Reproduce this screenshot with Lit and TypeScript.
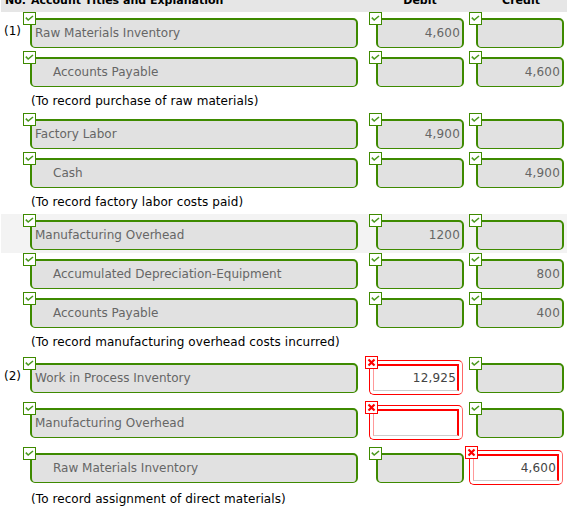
import { LitElement, html, css, svg } from "lit";
import { customElement } from "lit/decorators.js";

type Cell = { v?: string; bad?: boolean };
type Row =
  | { kind: "entry"; no?: string; acct: string; indent?: boolean; d: Cell; c: Cell; hi?: boolean; cls?: string }
  | { kind: "note"; text: string; cls?: string };

const rows: Row[] = [
  { kind: "entry", no: "(1)", acct: "Raw Materials Inventory", d: { v: "4,600" }, c: {} },
  { kind: "entry", acct: "Accounts Payable", indent: true, d: {}, c: { v: "4,600" } },
  { kind: "note", text: "(To record purchase of raw materials)" },
  { kind: "entry", acct: "Factory Labor", d: { v: "4,900" }, c: {} },
  { kind: "entry", acct: "Cash", indent: true, d: {}, c: { v: "4,900" } },
  { kind: "note", text: "(To record factory labor costs paid)" },
  { kind: "entry", acct: "Manufacturing Overhead", d: { v: "1200" }, c: {}, hi: true },
  { kind: "entry", acct: "Accumulated Depreciation-Equipment", indent: true, d: {}, c: { v: "800" } },
  { kind: "entry", acct: "Accounts Payable", indent: true, d: {}, c: { v: "400" } },
  { kind: "note", text: "(To record manufacturing overhead costs incurred)", cls: "tight" },
  { kind: "entry", no: "(2)", acct: "Work in Process Inventory", d: { v: "12,925", bad: true }, c: {}, cls: "wide" },
  { kind: "entry", acct: "Manufacturing Overhead", d: { bad: true }, c: {}, cls: "wide" },
  { kind: "entry", acct: "Raw Materials Inventory", indent: true, d: {}, c: { v: "4,600", bad: true }, cls: "wide" },
  { kind: "note", text: "(To record assignment of direct materials)", cls: "last" },
];

const badge = (bad: boolean) => html`<span class="badge ${bad ? "x" : "ok"}">
  <svg viewBox="0 0 11 11" width="11" height="11">
    ${bad
      ? svg`<path d="M2.5 2.5L8.5 8.5M8.5 2.5L2.5 8.5" stroke="#f00" stroke-width="2.2" fill="none"/>`
      : svg`<path d="M1.8 4.6L4.2 7L9 3" stroke="#4a9a1e" stroke-width="1.6" fill="none"/>`}
  </svg>
</span>`;

@customElement("app-root")
export class AppRoot extends LitElement {
  static styles = css`
    :host {
      display: block;
      width: 585px;
      height: 507px;
      overflow: hidden;
      background: #fff;
      font-family: "DejaVu Sans", Verdana, sans-serif;
      font-size: 12px;
      color: #000;
    }
    .head {
      display: flex;
      height: 12px;
      width: 566px;
      margin-left: 1px;
      background: #e6e6e6;
      overflow: hidden;
      font-weight: bold;
      font-size: 11px;
      line-height: 14px;
      align-items: flex-end;
      margin-bottom: 2px;
    }
    .head span { display: block; position: relative; top: -4px; white-space: nowrap; }
    .head .n { width: 30px; padding-left: 4px; box-sizing: border-box; }
    .head .a { width: 346px; }
    .head .d { width: 100px; text-align: center; padding-right: 14px; box-sizing: border-box; }
    .head .c { width: 88px; text-align: center; }

    .row {
      display: flex;
      height: 39px;
      margin-left: 1px;
      width: 566px;
      padding-top: 4px;
      box-sizing: border-box;
    }
    .row.hi { background: #f3f3f3; margin-top: -2px; margin-bottom: 2px; padding-top: 6px; }
    .row.wide { height: 45px; padding-top: 0; }
    .no { width: 29px; flex: none; padding-left: 3px; box-sizing: border-box; line-height: 14px; padding-top: 6px; }
    .cell { position: relative; flex: none; height: 30px; box-sizing: border-box; }
    .acct { width: 328px; margin-right: 18px; }
    .debit { width: 88px; margin-right: 12px; }
    .credit { width: 88px; }
    .box {
      height: 30px;
      box-sizing: border-box;
      background: #e1e1e1;
      border: 2px solid #3e8a00;
      border-bottom-width: 1px;
      border-radius: 5px;
      color: #666;
      line-height: 26px;
      padding: 0 2px;
      white-space: nowrap;
      overflow: hidden;
    }
    .acct .box { padding-left: 3px; }
    .acct .box.indent { padding-left: 21px; }
    .num { text-align: right; letter-spacing: 0.2px; }
    .badge {
      position: absolute;
      left: -7px;
      top: -6px;
      width: 13px;
      height: 13px;
      box-sizing: border-box;
      background: #fff;
      border: 1px solid #3e8a00;
      display: flex;
      align-items: center;
      justify-content: center;
      z-index: 2;
    }
    .badge.x { border-color: #f00; left: -5px; top: -5px; }
    .badge svg { display: block; flex: none; margin: -1px; }
    .bad {
      position: absolute;
      left: -7px;
      top: -3px;
      width: 94px;
      height: 35px;
      box-sizing: border-box;
      border: 1px solid #f00;
      border-right-color: #f66;
      border-radius: 5px;
      padding: 3px;
      background: #fff;
    }
    .bad .in {
      height: 100%;
      box-sizing: border-box;
      border: 2px solid #f00;
      border-left: 1px solid #f99;
      border-bottom: 1px solid #ccc;
      padding: 0 1px 0 2px;
      text-align: right;
      color: #444;
      letter-spacing: 0.2px;
      line-height: 24px;
      background: #fff;
    }
    .note { height: 23px; margin-left: 31px; line-height: 14px; padding-top: 2px; box-sizing: border-box; letter-spacing: 0.08px; }
    .note.tight { height: 30px; }
    .note.last { margin-top: -8px; }
  `;

  private cell(c: Cell, cls: string) {
    if (c.bad) {
      return html`<div class="cell ${cls}"><div class="bad">${badge(true)}<div class="in">${c.v ?? ""}</div></div></div>`;
    }
    return html`<div class="cell ${cls}">${badge(false)}<div class="box num">${c.v ?? ""}</div></div>`;
  }

  render() {
    return html`
      <div class="head">
        <span class="n">No.</span><span class="a">Account Titles and Explanation</span>
        <span class="d">Debit</span><span class="c">Credit</span>
      </div>
      ${rows.map((r) =>
        r.kind === "note"
          ? html`<div class="note ${r.cls ?? ""}">${r.text}</div>`
          : html`<div class="row ${r.hi ? "hi" : ""} ${r.cls ?? ""}">
              <div class="no">${r.no ?? ""}</div>
              <div class="cell acct">${badge(false)}<div class="box ${r.indent ? "indent" : ""}">${r.acct}</div></div>
              ${this.cell(r.d, "debit")} ${this.cell(r.c, "credit")}
            </div>`
      )}
    `;
  }
}
